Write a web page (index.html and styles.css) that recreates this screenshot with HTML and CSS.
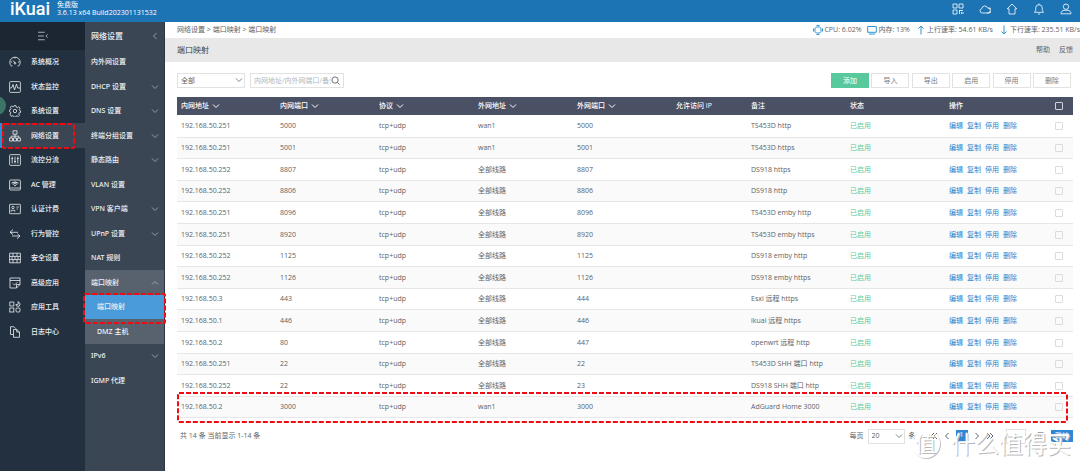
FILE: index.html
```html
<!DOCTYPE html>
<html lang="zh">
<head>
<meta charset="utf-8">
<title>iKuai 端口映射</title>
<link rel="stylesheet" href="styles.css">
</head>
<body>
<svg class="sprite" aria-hidden="true">
  <symbol id="down" viewBox="0 0 8 8"><path d="M1 2.500l3 3 3-3"/></symbol>
  <symbol id="up" viewBox="0 0 8 8"><path d="M1 5.500l3-3 3 3"/></symbol>
  <symbol id="left" viewBox="0 0 8 8"><path d="M5.500 1l-3 3 3 3"/></symbol>
  <symbol id="right" viewBox="0 0 8 8"><path d="M2.500 1l3 3-3 3"/></symbol>
  <symbol id="left2" viewBox="0 0 8 8"><path d="M4 1l-3 3 3 3M7 1l-3 3 3 3"/></symbol>
  <symbol id="right2" viewBox="0 0 8 8"><path d="M1 1l3 3-3 3M4 1l3 3-3 3"/></symbol>
</svg>
<header class="topbar">
  <div class="logo">iKuai</div>
  <div class="version"><span>免费版</span><span>3.6.13 x64 Build202301131532</span></div>
  <nav class="top-actions" aria-label="快捷操作">
    <button aria-label="二维码"><svg viewBox="0 0 12 12"><path d="M1 1h4v4H1zM7 1h4v4H7zM1 7h4v4H1zM7 7.500h4M7.500 7v4M9.500 9v2M11 9v2"/></svg></button>
    <button aria-label="云"><svg viewBox="0 0 12 12"><path d="M3 10A2.300 2.300 0 0 1 2.800 5.500 3 3 0 0 1 8.600 5 2.500 2.500 0 0 1 9 10ZM9.500 4.800A2.600 2.600 0 0 1 10 10H8"/></svg></button>
    <button aria-label="主页"><svg viewBox="0 0 12 12"><path d="M6 1L1.200 5.800H3V11H9V5.800H10.800Z"/></svg></button>
    <button aria-label="通知"><svg viewBox="0 0 12 12"><path d="M1.500 9.300H10.500L9.300 7.500V5A3.300 3.300 0 0 0 2.700 5V7.500ZM6 .5V1.700M5 11H7"/></svg></button>
    <button aria-label="用户"><svg viewBox="0 0 12 12"><circle cx="6" cy="3.700" r="2.700"/><path d="M1 10.800C1 8.500 2.500 7.500 4 7.300H8C9.500 7.500 11 8.500 11 10.800Z"/></svg></button>
  </nav>
</header>
<div class="shell">
  <nav class="side" aria-label="主菜单">
    <button class="side-toggle" aria-label="收起菜单"><svg viewBox="0 0 12 12"><path d="M0 1.500h8M0 6h7M0 10.500h8M11.500 4L9.500 6l2 2"/></svg></button>
    <span class="bubble"></span>
    <a class="side-item" href="#"><svg viewBox="0 0 12 12"><path d="M3.500 10H2.300A5.200 5.200 0 1 1 9.700 10H8.500M6 7L4 4.500M6 1v1.500M1.500 6H3M9 6h1.500"/><circle cx="6" cy="7.300" r=".8"/></svg>系统概况</a>
    <a class="side-item" href="#"><svg viewBox="0 0 12 12"><rect x=".6" y=".6" width="10.800" height="10.800" rx="1"/><path d="M1 7h1.500L4 3.500 5.500 9 7.500 3 8.700 7H11"/></svg>状态监控</a>
    <a class="side-item" href="#"><svg viewBox="0 0 12 12"><circle cx="6" cy="6" r="1.700"/><path d="M5 .7h2l.3 1.500 1.100.5 1.300-.9 1.400 1.400-.9 1.300.4 1 .9.300v1.700l-1.300.4-.5 1.100.8 1.300-1.300 1.300-1.300-.8-1.100.5-.3 1H5l-.3-1.200-1.100-.5-1.300.8L1 9.100l.8-1.300-.4-1L.3 6.400V5l1.300-.4.5-1.100-.8-1.300L2.600.9l1.200.9 1-.4z"/></svg>系统设置</a>
    <a class="side-item side-item--current" href="#"><svg viewBox="0 0 12 12"><path d="M4 .8h4v3.400H4zM.6 8h3v3h-3zM4.500 8h3v3h-3zM8.400 8h3v3h-3zM6 4.200V8M2.100 8V6.200h7.800V8"/></svg>网络设置
      <svg class="mark"><rect x="1" y="1" rx="1"/></svg></a>
    <a class="side-item" href="#"><svg viewBox="0 0 12 12"><rect x=".6" y=".6" width="10.800" height="10.800" rx="1"/><path d="M3.200 2.500v7M6 2.500v7M8.800 2.500v7M2.200 4.500h2M5 7.500h2M7.800 4.500h2"/></svg>流控分流</a>
    <a class="side-item" href="#"><svg viewBox="0 0 12 12"><rect x=".6" y="1" width="10.800" height="10" rx="1"/><path d="M.6 9h10.800M2.500 4.200Q6 1.300 9.500 4.200M3.700 5.500Q6 3.500 8.300 5.500M5 6.800Q6 6 7 6.800M3.500 3.700h5"/></svg>AC 管理</a>
    <a class="side-item" href="#"><svg viewBox="0 0 12 12"><rect x=".6" y="1.300" width="10.800" height="9.400" rx=".5"/><circle cx="4" cy="4.500" r="1.200"/><path d="M2.200 8.700V7.300h3.600v1.400M7.500 4h2.300M7.500 6h1.300"/></svg>认证计费</a>
    <a class="side-item" href="#"><svg viewBox="0 0 12 12"><path d="M4 1.500L1 4.300h8M1 4.300L4 6.500M3 8h8M8.500 5.800L11 8 8 10.800"/></svg>行为管控</a>
    <a class="side-item" href="#"><svg viewBox="0 0 12 12"><path d="M.6 1.200h10.800v9.600H.6zM.6 4.400h10.800M.6 7.600h10.800M4 1.200v3.200M8 1.200v3.200M6 4.400v3.200M3 4.400v3.200M9 4.400v3.200M4 7.600v3.200M8 7.600v3.200"/></svg>安全设置</a>
    <a class="side-item" href="#"><svg viewBox="0 0 12 12"><path d="M11 7.500V1H1v10h6.500zM1 3.500h10M4 6.500L5.500 8 8.500 5.300M7.500 11V7.500H11"/></svg>高级应用</a>
    <a class="side-item" href="#"><svg viewBox="0 0 12 12"><path d="M.8 1h4v4h-4zM9.200 .5l2 2.500-1 2.200H7.800l-1-1.500 2.400-.5z"/><rect x=".8" y="7" width="4" height="4"/><rect x="7" y="7" width="4" height="4" rx="1"/></svg>应用工具</a>
    <a class="side-item" href="#"><svg viewBox="0 0 12 12"><path d="M4 8.500H1.500V.7h3.300l2 2M4.500 3.500h3.300L10.500 6v5.300h-6zM7.700 3.500V6h2.800"/></svg>日志中心</a>
  </nav>
  <nav class="sub" aria-label="网络设置">
    <div class="sub-title">网络设置<svg class="chev"><use href="#left"/></svg></div>
    <a class="sub-item" href="#">内外网设置</a>
    <a class="sub-item" href="#">DHCP 设置<svg class="chev"><use href="#down"/></svg></a>
    <a class="sub-item" href="#">DNS 设置<svg class="chev"><use href="#down"/></svg></a>
    <a class="sub-item" href="#">终端分组设置<svg class="chev"><use href="#down"/></svg></a>
    <a class="sub-item" href="#">静态路由<svg class="chev"><use href="#down"/></svg></a>
    <a class="sub-item" href="#">VLAN 设置</a>
    <a class="sub-item" href="#">VPN 客户端<svg class="chev"><use href="#down"/></svg></a>
    <a class="sub-item" href="#">UPnP 设置<svg class="chev"><use href="#down"/></svg></a>
    <a class="sub-item" href="#">NAT 规则</a>
    <a class="sub-item sub-item--open" href="#">端口映射<svg class="chev"><use href="#up"/></svg></a>
    <a class="sub-item sub-item--leaf sub-item--active" href="#">端口映射<svg class="mark"><rect x="1" y="1" rx="1"/></svg></a>
    <a class="sub-item sub-item--leaf" href="#">DMZ 主机</a>
    <a class="sub-item" href="#">IPv6<svg class="chev"><use href="#down"/></svg></a>
    <a class="sub-item" href="#">IGMP 代理</a>
  </nav>
  <main class="main">
    <div class="crumbs">
      <span>网络设置 &gt; 端口映射 &gt; 端口映射</span>
      <div class="stats">
        <span class="stat"><svg viewBox="0 0 10 10"><path d="M3.300 2h3.400L8 3.300v3.400L6.700 8H3.300L2 6.700V3.300zM3.500 .5h3M3.500 9.500h3M.5 3.500v3M9.500 3.500v3"/></svg>CPU: 6.02%</span>
        <span class="stat"><svg viewBox="0 0 10 10"><path d="M.7 1.500h8.600v5.800H.7zM2 9h6"/></svg>内存: 13%</span>
        <span class="stat"><svg viewBox="0 0 10 10"><path d="M5 9.500V1M2.500 3.500L5 1l2.500 2.500"/></svg>上行速率: 54.61 KB/s</span>
        <span class="stat"><svg viewBox="0 0 10 10"><path d="M5 .5V9M2.500 6.500L5 9l2.500-2.500"/></svg>下行速率: 235.51 KB/s</span>
      </div>
    </div>
    <div class="titlebar"><h1>端口映射</h1><div class="help"><a href="#">帮助</a><a href="#">反馈</a></div></div>
    <div class="content">
      <div class="toolbar">
        <span class="pick pick--wide"><select aria-label="筛选"><option>全部</option></select><svg class="chev"><use href="#down"/></svg></span>
        <label class="search"><input type="text" aria-label="搜索" placeholder="内网地址/内外网端口/备注"><svg viewBox="0 0 10 10"><circle cx="4.500" cy="4.500" r="3.500"/><path d="M7 7l2.500 2.500"/></svg></label>
        <div class="buttons">
          <button class="btn btn--primary">添加</button><button class="btn">导入</button><button class="btn">导出</button><button class="btn">启用</button><button class="btn">停用</button><button class="btn">删除</button>
        </div>
      </div>
      <div class="table-wrap">
        <table class="grid">
          <colgroup><col class="c-std"><col class="c-std"><col class="c-std"><col class="c-std"><col class="c-std"><col class="c-ip"><col class="c-std"><col class="c-std"><col class="c-std"><col class="c-check"></colgroup>
          <thead><tr>
            <th>内网地址<svg class="chev"><use href="#down"/></svg></th><th>内网端口<svg class="chev"><use href="#down"/></svg></th><th>协议<svg class="chev"><use href="#down"/></svg></th><th>外网地址<svg class="chev"><use href="#down"/></svg></th><th>外网端口<svg class="chev"><use href="#down"/></svg></th><th>允许访问 IP</th><th>备注</th><th>状态</th><th>操作</th><th class="check"><input type="checkbox" aria-label="全选"></th>
          </tr></thead>
          <tbody id="rows"></tbody>
        </table>
        <svg class="mark mark--row"><rect x="1" y="1" rx="1"/></svg>
      </div>
      <footer class="pager">
        <span class="total">共 14 条 当前显示 1-14 条</span>
        <span>每页</span>
        <span class="pick"><select aria-label="每页条数"><option>20</option></select><svg class="chev"><use href="#down"/></svg></span>
        <span>条</span>
        <div class="pages">
          <button aria-label="首页"><svg class="chev"><use href="#left2"/></svg></button>
          <button aria-label="上一页"><svg class="chev"><use href="#left"/></svg></button>
          <button class="page-now">1</button>
          <button aria-label="下一页"><svg class="chev"><use href="#right"/></svg></button>
          <button aria-label="末页"><svg class="chev"><use href="#right2"/></svg></button>
        </div>
        <input class="page-input" type="text" aria-label="页码" value="1">
        <span class="of">/ 1页</span>
        <button class="jump">跳转</button>
        <div class="watermark"><span class="watermark-badge">值</span><span>什么值得买</span></div>
      </footer>
    </div>
  </main>
</div>
<script src="rows.js"></script>
</body>
</html>
```
FILE: styles.css
```css
* { box-sizing: border-box; }
body {
  margin: 0;
  min-height: 100vh;
  display: flex;
  flex-direction: column;
  overflow: hidden;
  background: #fff;
  color: #606266;
  font: 7px/10px "Open Sans", "Noto Sans CJK SC", sans-serif;
}
a { color: inherit; text-decoration: none; }
button, input, select { margin: 0; padding: 0; border: 0; background: none; color: inherit; font: inherit; }
svg { fill: none; stroke: currentColor; flex: none; }
.sprite { position: absolute; width: 0; height: 0; }
.chev { width: 8px; height: 8px; }

.topbar { display: flex; height: 22px; background: #1c74b5; color: #fff; }
.logo { width: 57px; padding-left: 10px; font: 500 18px/18px Roboto, sans-serif; }
.version { display: flex; flex-direction: column; line-height: 8px; padding-top: 1px; white-space: nowrap; }
.top-actions { display: flex; gap: 15px; margin-left: auto; padding: 3px 8px 0 0; align-items: flex-start; }
.top-actions button { height: 12px; }
.top-actions svg { width: 12px; height: 12px; stroke-width: .8; }

.shell { display: flex; flex: 1; }
.side { position: relative; width: 85px; background: #22303f; }
.side, .sub { color: #eef1f4; font-family: "Noto Sans", "Noto Sans CJK SC", sans-serif; font-weight: 500; }
.side-toggle { display: flex; width: 100%; height: 28px; align-items: center; justify-content: center; background: #1b2632; }
.side-toggle svg { width: 12px; height: 10px; stroke-width: .8; }
.side-item, .sub-item { position: relative; display: flex; align-items: center; height: 24px; }
.side-item:nth-of-type(even), .sub-item:nth-of-type(even) { height: 25px; }
.side-item { gap: 10px; padding-left: 9px; }
.side-item > svg:first-child { width: 12px; height: 12px; stroke-width: .8; }
.side-item--current { background: #3a4654; box-shadow: inset 2px 0 #2b8fd8; }
.bubble { position: absolute; left: -13px; top: 74px; width: 19px; height: 19px; border-radius: 50%; background: #3d7468; z-index: 1; }

.sub { width: 80px; background: #3a4654; border-right: 1px solid #2a3644; }
.sub-title { display: flex; align-items: center; justify-content: space-between; height: 28px; padding: 0 5px 0 6px; font-size: 8px; }
.sub-item { justify-content: space-between; padding: 0 5px 0 6px; }
.sub .chev { stroke: #aab2bb; stroke-width: .8; }
.sub-item--open, .sub-item--leaf { background: #58626e; }
.sub-item--leaf { padding-left: 12px; }
.sub-item--active { background: #4a9bd9; }

.mark { position: absolute; z-index: 2; stroke: #f00b12; stroke-width: 2; stroke-dasharray: 5 2; overflow: visible; pointer-events: none; }
.mark rect { width: calc(100% - 2px); height: calc(100% - 2px); }
.side-item .mark { left: 2px; top: 0; width: 73px; height: 26px; }
.sub-item .mark { left: -2px; top: -2px; width: 83px; height: 31px; }
.mark--row { left: 0; bottom: -5px; width: calc(100% - 5px); height: 31px; }

.main { flex: 1; min-width: 0; }
.crumbs { display: flex; justify-content: space-between; height: 16px; padding-left: 12px; align-items: center; white-space: nowrap; }
.stats { display: flex; gap: 6px; }
.stat { display: flex; align-items: center; gap: 1px; }
.stat svg { width: 10px; height: 10px; stroke: #2f93d6; }
.titlebar { display: flex; align-items: center; justify-content: space-between; height: 24px; padding: 0 7px 0 12px; background: #e8e8e8; }
h1 { margin: 0; font-size: 8px; font-weight: 400; color: #444; }
.help { display: flex; gap: 9px; }
.content { padding: 11px 7px 0 12px; }

.toolbar { display: flex; gap: 5px; height: 24px; align-items: flex-start; }
.pick { position: relative; display: flex; width: 37px; height: 15px; }
.pick--wide { width: 68px; }
.pick select { width: 100%; padding-left: 3px; border: 1px solid #e2e2e2; appearance: none; }
.pick .chev { position: absolute; right: 2px; top: 3px; stroke-width: .8; pointer-events: none; }
.search { display: flex; align-items: center; width: 94px; height: 15px; padding: 0 3px; border: 1px solid #e2e2e2; }
.search input { flex: 1; min-width: 0; }
.search input::placeholder { color: #b4b7bc; }
.search svg { width: 9px; height: 9px; }
.buttons { display: flex; justify-content: space-between; width: 240px; margin: 0 2px 0 auto; }
.btn { width: 38px; height: 15px; border: 1px solid #e2e2e2; color: #777b80; line-height: 10px; }
.btn--primary { border-color: #57c99d; background: #57c99d; color: #fff; }

.table-wrap { position: relative; }
.grid { width: 100%; table-layout: fixed; border-collapse: collapse; }
.c-std { width: 99px; }
.c-ip { width: 75px; }
.c-check { width: 29px; }
th { height: 18px; padding: 0 0 0 4px; background: #4b5165; color: #fff; font-weight: 500; text-align: left; }
th .chev { margin-left: 3px; vertical-align: middle; }
td { height: 22px; padding: 1px 0 0 4px; border-bottom: 1px solid #e6e6e6; white-space: nowrap; }
tbody tr:nth-child(even) { background: #fafafa; }
tbody tr:nth-child(5n+2) td, tbody tr:nth-child(5n+4) td { height: 21px; }
.ok { color: #5dca9d; }
.ops { display: flex; gap: 4px; color: #1f83cf; }
.check { padding-left: 0; text-align: center; }
input[type="checkbox"] { appearance: none; display: inline-block; width: 8px; height: 8px; border: 1px solid #dcdcdc; border-radius: 1px; vertical-align: middle; }
th input[type="checkbox"] { border-color: #d0d2d8; }

.pager { position: relative; display: flex; align-items: center; padding: 11px 0 0 3px; }
.total { margin-right: auto; }
.pager .pick { margin: 0 4px; }
.pages { display: flex; align-items: center; gap: 5px; margin: 0 12px 0 14px; }
.pages button { display: flex; justify-content: center; }
.pages .page-now { width: 12px; height: 12px; background: #2f86d2; color: #fff; }
.page-input { width: 20px; height: 15px; border: 1px solid #e2e2e2; text-align: center; }
.of { margin: 0 7px 0 3px; }
.jump { width: 22px; height: 12px; background: #2f86d2; color: #fff; }
.watermark { position: absolute; right: 2px; top: 11px; display: flex; align-items: center; gap: 11px; color: #fff; font-size: 24px; line-height: 30px; text-shadow: 1px 1px 0 #b9b9b9; pointer-events: none; }
.watermark-badge { width: 29px; height: 29px; border: 1px solid #fff; border-radius: 50%; box-shadow: 1px 1px 0 #c2c2c2; font-size: 21px; line-height: 27px; text-align: center; }
```
FILE: rows.js
```
const rules = [
  ["192.168.50.251", "5000", "wan1", "5000", "TS453D http"],
  ["192.168.50.251", "5001", "wan1", "5001", "TS453D https"],
  ["192.168.50.252", "8807", "全部线路", "8807", "DS918 https"],
  ["192.168.50.252", "8806", "全部线路", "8806", "DS918 http"],
  ["192.168.50.251", "8096", "全部线路", "8096", "TS453D emby http"],
  ["192.168.50.251", "8920", "全部线路", "8920", "TS453D emby https"],
  ["192.168.50.252", "1125", "全部线路", "1125", "DS918 emby http"],
  ["192.168.50.252", "1126", "全部线路", "1126", "DS918 emby https"],
  ["192.168.50.3", "443", "全部线路", "444", "Esxi 远程 https"],
  ["192.168.50.1", "446", "全部线路", "446", "ikuai 远程 https"],
  ["192.168.50.2", "80", "全部线路", "447", "openwrt 远程 http"],
  ["192.168.50.251", "22", "全部线路", "22", "TS453D SHH 端口 http"],
  ["192.168.50.252", "22", "全部线路", "23", "DS918 SHH 端口 http"],
  ["192.168.50.2", "3000", "wan1", "3000", "AdGuard Home 3000"]
];
const ops = ["编辑", "复制", "停用", "删除"].map(t => `<a href="#">${t}</a>`).join("");
document.getElementById("rows").innerHTML = rules.map(([ip, port, wan, out, note]) => `
  <tr><td>${ip}</td><td>${port}</td><td>tcp+udp</td><td>${wan}</td><td>${out}</td><td></td>
  <td>${note}</td><td class="ok">已启用</td><td><div class="ops">${ops}</div></td>
  <td class="check"><input type="checkbox" aria-label="选择 ${note}"></td></tr>`).join("");
```
